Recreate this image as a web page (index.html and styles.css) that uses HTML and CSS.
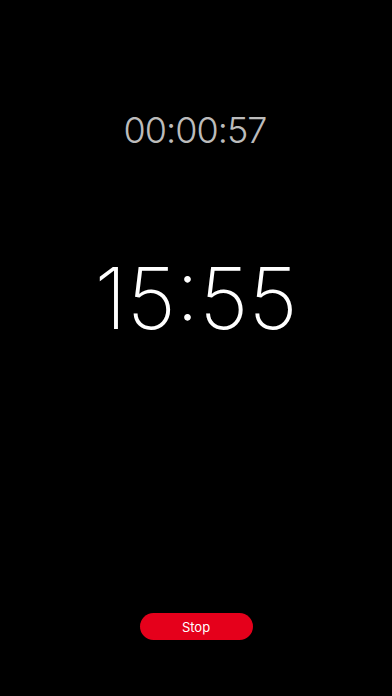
FILE: index.html
```html
<!DOCTYPE html>
<html>
<head>
<meta charset="utf-8">
<link rel="stylesheet" href="styles.css">
</head>
<body>
<main class="screen">
  <div class="elapsed">00:00:57</div>
  <div class="clock">15:55</div>
  <div class="spacer"></div>
  <button class="stop">Stop</button>
</main>
</body>
</html>
```
FILE: styles.css
```css
html, body {
  margin: 0;
  padding: 0;
  background: #000;
}
.screen {
  width: 392px;
  height: 696px;
  display: flex;
  flex-direction: column;
  align-items: center;
  box-sizing: border-box;
  padding-top: 112px;
  padding-bottom: 56px;
  font-family: Inter, Roboto, "Liberation Sans", sans-serif;
}
.elapsed {
  padding-right: 2px;
  font-size: 36px;
  line-height: 36px;
  font-weight: 300;
  letter-spacing: -1px;
  color: #bcbcbc;
}
.clock {
  margin-top: 108px;
  font-size: 85px;
  line-height: 85px;
  font-weight: 200;
  color: #fff;
}
.spacer {
  flex: 1;
}
.stop {
  width: 113px;
  height: 27px;
  border: none;
  border-radius: 14px;
  background: #e5001b;
  color: #fff;
  font-family: Inter, Roboto, "Liberation Sans", sans-serif;
  font-size: 13px;
  padding: 0;
}
```
